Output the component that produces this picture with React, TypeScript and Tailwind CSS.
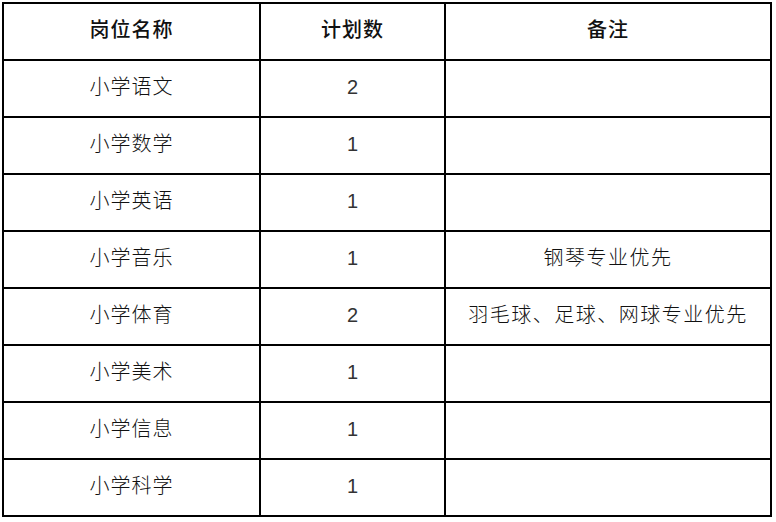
const rows: [string, string, string][] = [
  ["小学语文", "2", ""],
  ["小学数学", "1", ""],
  ["小学英语", "1", ""],
  ["小学音乐", "1", "钢琴专业优先"],
  ["小学体育", "2", "羽毛球、足球、网球专业优先"],
  ["小学美术", "1", ""],
  ["小学信息", "1", ""],
  ["小学科学", "1", ""],
];

export default function App() {
  return (
    <div className="w-[776px] h-[522px] bg-white pt-[2px] pl-[2px] font-['Liberation_Sans','Noto_Sans_CJK_SC',sans-serif] text-[#111]">
      <table className="table-fixed border-collapse w-[768px]">
        <colgroup>
          <col className="w-[257px]" />
          <col className="w-[185px]" />
          <col className="w-[326px]" />
        </colgroup>
        <thead>
          <tr className="h-[57px]">
            <th className="border-2 border-black pb-[3px] text-[20px] tracking-[1px] font-medium">岗位名称</th>
            <th className="border-2 border-black pb-[3px] text-[20px] tracking-[1px] font-medium">计划数</th>
            <th className="border-2 border-black pb-[3px] text-[20px] tracking-[1px] font-medium">备注</th>
          </tr>
        </thead>
        <tbody>
          {rows.map(([name, count, note]) => (
            <tr key={name} className="h-[57px]">
              <td className="border-2 border-black pb-[3px] text-center text-[20px] tracking-[1px] font-light">{name}</td>
              <td className="border-2 border-black pb-[3px] text-center text-[20px] text-[#333]">{count}</td>
              <td className="border-2 border-black pb-[3px] text-center text-[20px] tracking-[1.5px] font-light">{note}</td>
            </tr>
          ))}
        </tbody>
      </table>
    </div>
  );
}
